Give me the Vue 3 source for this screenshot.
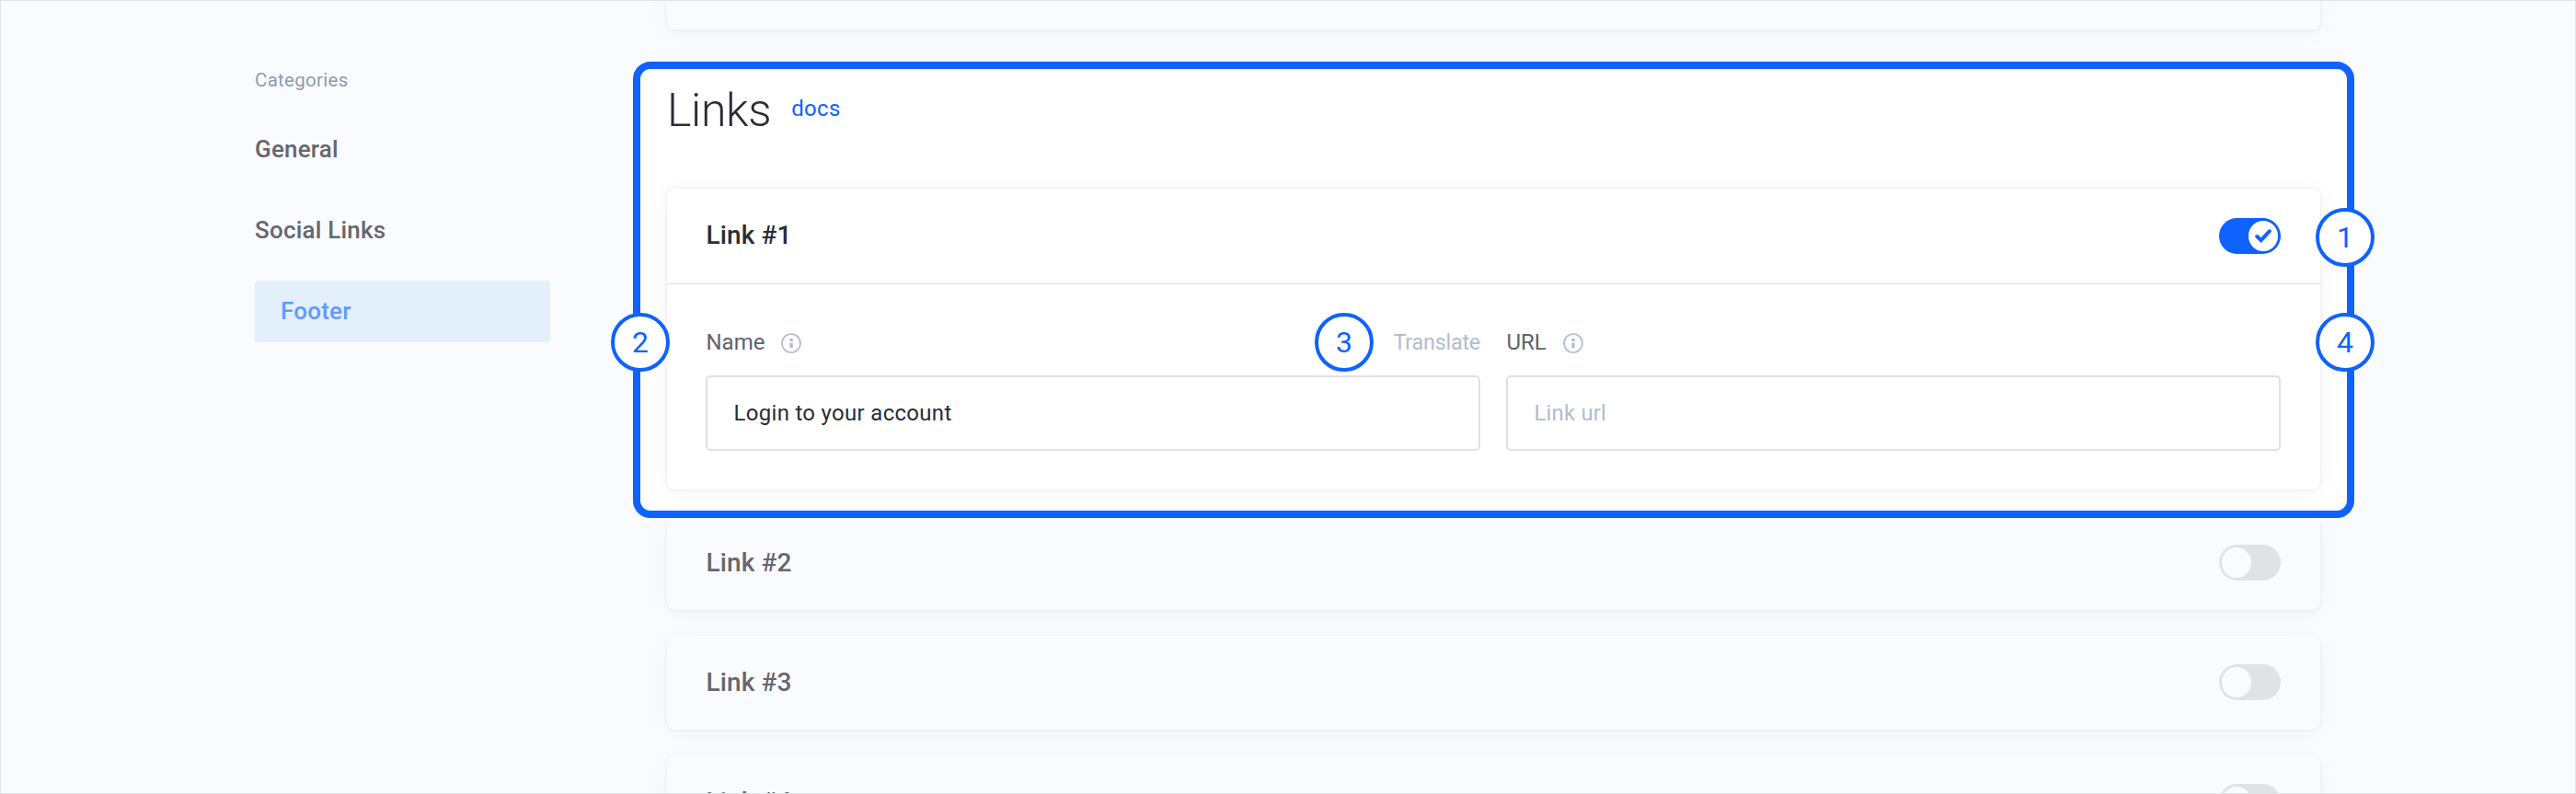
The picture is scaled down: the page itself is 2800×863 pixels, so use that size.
<script setup>
const categories = [
  { name: 'General', active: false },
  { name: 'Social Links', active: false },
  { name: 'Footer', active: true },
]
const collapsed = ['Link #2', 'Link #3', 'Link #4']
</script>

<template>
  <div class="page">
    <aside class="sidebar">
      <div class="caption">Categories</div>
      <nav class="nav">
        <a v-for="c in categories" :key="c.name" class="nav-item" :class="{ active: c.active }"><span>{{ c.name }}</span></a>
      </nav>
    </aside>

    <main class="main">
      <section class="card dim previous"></section>

      <div class="highlight">
        <div class="frame">
          <header class="heading">
            <h1>Links</h1>
            <a class="docs">docs</a>
          </header>
          <section class="card open">
            <div class="card-head">
              <h2>Link #1</h2>
              <span class="toggle on">
                <span class="knob">
                  <svg viewBox="0 0 32 32" width="32" height="32">
                    <path d="M9.3 17 L13.7 21.2 L22.8 11.3" fill="none" stroke="#0f62fe" stroke-width="4" stroke-linecap="round" />
                  </svg>
                </span>
              </span>
            </div>
            <div class="fields">
              <div class="field">
                <div class="label-row">
                  <label>Name</label>
                  <svg class="info" viewBox="0 0 22 22" width="22" height="22">
                    <circle cx="11" cy="11" r="10" fill="none" stroke="#b3bccf" stroke-width="1.7" />
                    <path d="M9.3 6h3.5v3h-3.5zM9.3 10.8h3.5v5.2h-3.5z" fill="#b3bccf" />
                  </svg>
                  <span class="translate">Translate</span>
                </div>
                <div class="input"><span class="value">Login to your account</span></div>
              </div>
              <div class="field">
                <div class="label-row">
                  <label>URL</label>
                  <svg class="info" viewBox="0 0 22 22" width="22" height="22">
                    <circle cx="11" cy="11" r="10" fill="none" stroke="#b3bccf" stroke-width="1.7" />
                    <path d="M9.3 6h3.5v3h-3.5zM9.3 10.8h3.5v5.2h-3.5z" fill="#b3bccf" />
                  </svg>
                </div>
                <div class="input"><span class="placeholder">Link url</span></div>
              </div>
            </div>
          </section>
        </div>
        <span class="badge b1">1</span>
        <span class="badge b2">2</span>
        <span class="badge b3">3</span>
        <span class="badge b4">4</span>
      </div>

      <div class="stack">
        <section v-for="l in collapsed" :key="l" class="card dim">
          <div class="card-head">
            <h2>{{ l }}</h2>
            <span class="toggle"><span class="knob"></span></span>
          </div>
        </section>
      </div>
    </main>
  </div>
</template>

<style>
html,
body {
  margin: 0;
  background: #fafbff;
}
</style>

<style scoped>
* {
  box-sizing: border-box;
}
.page {
  width: 2800px;
  height: 863px;
  overflow: hidden;
  border: 1px solid #e1e2e6;
  background: #fafbff;
  font-family: Roboto, sans-serif;
  color: #2b2c37;
  display: flex;
  align-items: flex-start;
}
.sidebar {
  width: 321px;
  margin-left: 276px;
  padding-top: 69px;
  flex: none;
}
.caption {
  font-size: 20.5px;
  line-height: 34px;
  letter-spacing: 0.3px;
  color: #8e9bb0;
}
.nav {
  display: flex;
  flex-direction: column;
  gap: 21px;
  margin-top: 25px;
}
.nav-item {
  display: flex;
  align-items: center;
  height: 67px;
  font-size: 26px;
  font-weight: 500;
  letter-spacing: 0.2px;
  color: #65676f;
  white-space: nowrap;
}
.nav-item span {
  margin-bottom: 1px;
}
.nav-item.active {
  padding-left: 28px;
  border-radius: 3px;
  background: #e3effb;
  color: #629aff;
}
.main {
  width: 1871px;
  margin-left: 90px;
  flex: none;
}
.card {
  margin: 0 37px;
  border-radius: 8px;
  background: #fff;
  box-shadow: 0 0 3px 1px rgba(0, 0, 0, 0.06), 0 4px 30px rgba(0, 0, 0, 0.04);
}
.card.dim {
  background: #fafbff;
  box-shadow: 0 1px 3px 1px rgba(0, 0, 0, 0.04), 0 4px 30px rgba(0, 0, 0, 0.03);
}
.previous {
  height: 51px;
  margin-top: -20px;
}
.highlight {
  position: relative;
  z-index: 2;
  margin-top: 35px;
}
.frame {
  height: 496px;
  border: 8px solid #0f62fe;
  border-radius: 19px;
  background: #fff;
  overflow: hidden;
}
.heading {
  display: flex;
  align-items: baseline;
  height: 130px;
  padding: 14px 0 0 29px;
}
h1 {
  margin: 0;
  font-size: 50px;
  line-height: 63px;
  font-weight: 300;
  letter-spacing: -0.35px;
}
.docs {
  margin-left: 22px;
  font-size: 24px;
  letter-spacing: 0.3px;
  color: #0f62fe;
  position: relative;
  top: -11px;
}
.card.open {
  height: 327px;
  margin: 0 29px;
}
.card-head {
  display: flex;
  align-items: center;
  justify-content: space-between;
  height: 101px;
  padding: 0 43px 0 42.5px;
}
.dim .card-head {
  margin-bottom: 1px;
}
.open .card-head {
  height: 104px;
  border-bottom: 1.5px solid #e0e0e8;
}
h2 {
  margin: 0 0 1px;
  font-size: 28px;
  line-height: 34px;
  font-weight: 500;
  letter-spacing: 0.1px;
}
.dim h2 {
  margin: 0;
  color: #65676f;
}
.toggle {
  display: flex;
  align-items: center;
  width: 67px;
  height: 39px;
  padding: 0 3px;
  border-radius: 20px;
  background: #e1e2e6;
}
.toggle.on {
  background: #0f62fe;
  justify-content: flex-end;
}
.knob {
  width: 32px;
  height: 33px;
  border-radius: 50%;
  background: #fafbff;
}
.toggle.on .knob {
  background: #fff;
}
.knob svg {
  display: block;
}
.fields {
  display: flex;
  gap: 28px;
  padding: 47px 43px 0 42px;
}
.field {
  flex: 1;
}
.label-row {
  display: flex;
  align-items: center;
  height: 32px;
  font-size: 24px;
  color: #5f616c;
}
label {
  margin-left: 0.5px;
}
.info {
  margin: 2px 0 0 18px;
}
.translate {
  margin-left: auto;
  font-size: 23.5px;
  letter-spacing: -0.3px;
  color: #b3bccf;
}
.input {
  display: flex;
  align-items: center;
  height: 82px;
  margin-top: 20px;
  padding-left: 28.5px;
  border: 2px solid #e0e0e8;
  border-radius: 5px;
  font-size: 24px;
}
.value {
  letter-spacing: 0.3px;
}
.placeholder {
  letter-spacing: 0.15px;
  color: #b3bccf;
}
/* Numbered markers lie over the frame and the fields it surrounds */
.badge {
  position: absolute;
  width: 64px;
  height: 64px;
  border: 4px solid #0f62fe;
  border-radius: 50%;
  background: #fff;
  color: #0f62fe;
  font-size: 32px;
  line-height: 56px;
  text-align: center;
}
.b1 { left: 1829px; top: 159px; }
.b2 { left: -24px; top: 273px; }
.b3 { left: 741px; top: 273px; }
.b4 { left: 1829px; top: 273px; }
.stack {
  display: flex;
  flex-direction: column;
  gap: 28px;
  margin-top: -2px;
}
</style>
